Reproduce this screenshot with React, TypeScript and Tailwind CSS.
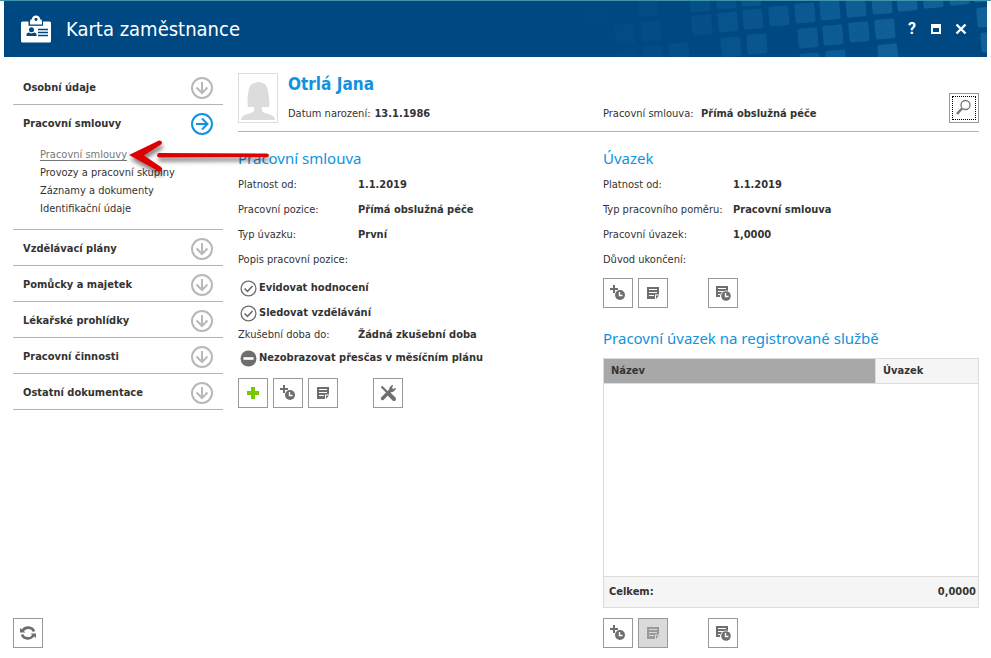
import type { ReactNode } from 'react';

interface MenuSection {
  title: string;
  items?: string[];
}

interface Field {
  label: string;
  value?: string;
}

const sections: MenuSection[] = [
  { title: 'Osobní údaje' },
  {
    title: 'Pracovní smlouvy',
    items: ['Pracovní smlouvy', 'Provozy a pracovní skupiny', 'Záznamy a dokumenty', 'Identifikační údaje'],
  },
  { title: 'Vzdělávací plány' },
  { title: 'Pomůcky a majetek' },
  { title: 'Lékařské prohlídky' },
  { title: 'Pracovní činnosti' },
  { title: 'Ostatní dokumentace' },
];

const contractFields: Field[] = [
  { label: 'Platnost od:', value: '1.1.2019' },
  { label: 'Pracovní pozice:', value: 'Přímá obslužná péče' },
  { label: 'Typ úvazku:', value: 'První' },
  { label: 'Popis pracovní pozice:' },
];

const workloadFields: Field[] = [
  { label: 'Platnost od:', value: '1.1.2019' },
  { label: 'Typ pracovního poměru:', value: 'Pracovní smlouva' },
  { label: 'Pracovní úvazek:', value: '1,0000' },
  { label: 'Důvod ukončení:' },
];

// Centres of the tilted tiles in the header
const tiles = [
  [16, 13], [68, 6], [120, 2], [146, -1], [171, -4],
  [45, 34], [71, 31], [122, 25], [148, 22], [173, 19], [199, 16], [225, 13], [250, 10], [276, 7], [302, 4], [327, 1], [353, -2], [379, -5], [403, -8],
  [47, 59], [73, 56], [99, 53], [151, 47], [177, 44], [228, 38], [253, 35], [279, 32], [305, 29], [407, 17],
  [230, 63], [256, 60], [308, 54], [411, 42],
];

function HeaderTiles() {
  return (
    <svg className="absolute right-0 top-0" width="407" height="56" viewBox="0 0 407 56" aria-hidden="true">
      {tiles.map(([x, y]) => (
        <rect
          key={`${x}-${y}`}
          x={x - 10}
          y={y - 11}
          width="20"
          height="20"
          rx="2.5"
          fill="#116199"
          opacity={Math.min(1, Math.max(0.04, (x - 10) / 320))}
          transform={`rotate(-5 ${x} ${y})`}
        />
      ))}
    </svg>
  );
}

function BadgeIcon() {
  return (
    <svg width="30" height="28" viewBox="0 0 30 28" aria-hidden="true">
      <rect y="6.500" width="30" height="21" rx="1.500" fill="#fff" />
      <path d="M7.500 6H22V10.800H7.500Z" fill="#004882" />
      <path
        fill="#fff"
        fillRule="evenodd"
        d="M9 9.500V6Q9 4.500 10.800 4.200Q11.500 .5 15 .5T19.200 4.200Q21 4.500 21 6V9.500ZM15 2.700A1.600 1.600 0 1 0 15 5.900A1.600 1.600 0 1 0 15 2.700Z"
      />
      <circle cx="10.500" cy="14.700" r="2.500" fill="#004882" />
      <path d="M5.500 21V19.500Q5.500 17.800 7.500 17.500L10.500 18.500L13.500 17.500Q15.500 17.800 15.500 19.500V21Z" fill="#004882" />
      <path d="M17 14.500H27M17 17.500H27M17 20.500H27" stroke="#004882" strokeWidth="1.300" />
    </svg>
  );
}

function CircleArrow({ active }: { active?: boolean }) {
  return (
    <svg width="22" height="22" viewBox="0 0 22 22" fill="none" stroke={active ? '#0f93e0' : '#b8b8b8'} strokeWidth="2" aria-hidden="true">
      <circle cx="11" cy="11" r="10" />
      {active ? <path d="M5 11H16M11 5.500L16.500 11L11 16.500" /> : <path d="M11 5V16M5.500 10.500L11 16L16.500 10.500" />}
    </svg>
  );
}

function RedArrow() {
  return (
    <svg className="pointer-events-none absolute -top-2 left-20 z-10" width="160" height="50" viewBox="0 0 160 50" aria-hidden="true">
      <defs>
        <filter id="arrow-shadow" x="-10%" y="-40%" width="120%" height="200%">
          <feDropShadow dx="1" dy="4" stdDeviation="2" floodColor="#000" floodOpacity="0.5" />
        </filter>
      </defs>
      <g filter="url(#arrow-shadow)" fill="#dc0000">
        <path d="M9 17L39 2.500Q42 2 42 5Q42 6 40 7.200L24 17.500L41 29Q43 31 41 33Q40 34.500 38 33Z" />
        <path d="M39 15L147 15.500Q149 16 149 17.300Q149 19 147 19L39 19.500Q37 19 37 17.200Q37 15.200 39 15Z" />
      </g>
    </svg>
  );
}

function AvatarIcon() {
  return (
    <svg width="34" height="44" viewBox="0 0 34 44" fill="#dcdcdc" aria-hidden="true">
      <path d="M7 29Q6 25 7 16Q8 5 14 5Q17 3 21 5Q27 6 27.500 16Q29 25 28 29L21 29V33Q22 34.500 29 36.500Q34 38 34 42H0Q0 38 5 36.500Q12 34.500 13 33V29Z" />
    </svg>
  );
}

function PlusIcon() {
  return (
    <svg width="20" height="20" viewBox="0 0 20 20" aria-hidden="true">
      <path d="M10 4V16M4 10H16" stroke="#76c800" strokeWidth="4" />
    </svg>
  );
}

function AddClockIcon() {
  return (
    <svg width="20" height="20" viewBox="0 0 20 20" fill="none" aria-hidden="true">
      <path d="M6 2V10M2 6H10" stroke="#6e6e6e" strokeWidth="2" />
      <circle cx="12" cy="12" r="5" fill="#6e6e6e" />
      <path d="M11.500 9V12.500H14.500" stroke="#fff" strokeWidth="1.400" />
    </svg>
  );
}

function NoteIcon({ color = '#6e6e6e' }: { color?: string }) {
  return (
    <svg width="20" height="20" viewBox="0 0 20 20" aria-hidden="true">
      <path fill={color} fillRule="evenodd" d="M4 4H16V11.500H12V16H4ZM6 6V7H14V6ZM6 9V10H14V9ZM6 12V13H11V12Z" />
      <path fill={color} d="M13 12.500H16L13 16Z" />
    </svg>
  );
}

function NoteClockIcon() {
  return (
    <svg width="20" height="20" viewBox="0 0 20 20" fill="none" aria-hidden="true">
      <path fill="#6e6e6e" fillRule="evenodd" d="M3 3H15V8H11L7 12V14H3ZM5 5V6H13V5ZM5 8V9H10V8ZM5 11V12H8V11Z" />
      <circle cx="13" cy="13" r="5.600" fill="#fff" />
      <circle cx="13" cy="13" r="4.800" fill="#6e6e6e" />
      <path d="M12.500 10V13.500H15.500" stroke="#fff" strokeWidth="1.400" />
    </svg>
  );
}

function ToolsIcon() {
  return (
    <svg width="20" height="20" viewBox="0 0 20 20" fill="none" stroke="#6e6e6e" aria-hidden="true">
      <path d="M3.500 3.500L10 10" strokeWidth="2.200" />
      <path d="M11.500 11.500L16 16" strokeWidth="4" strokeLinecap="round" />
      <path d="M4.500 15.500L13 7" strokeWidth="3.400" strokeLinecap="round" />
      <path d="M14.500 2.500Q11 3.500 12 8Q16 9.500 17.500 5.500L15 6.500L13.500 5Z" fill="#6e6e6e" strokeWidth="1" />
    </svg>
  );
}

function RefreshIcon() {
  return (
    <svg width="20" height="20" viewBox="0 0 20 20" fill="none" aria-hidden="true">
      <path d="M4.500 8A6.200 5.800 0 0 1 16 8.500M15.500 12A6.200 5.800 0 0 1 4 11.500" stroke="#6e6e6e" strokeWidth="2.600" />
      <path d="M2 5V9.500H7.500ZM18 15V10.500H12.500Z" fill="#6e6e6e" />
    </svg>
  );
}

function SearchIcon() {
  return (
    <svg width="20" height="20" viewBox="0 0 20 20" fill="none" stroke="#777" aria-hidden="true">
      <circle cx="11.500" cy="7" r="4.500" strokeWidth="1.300" />
      <path d="M8 10.500L3 16" strokeWidth="2.400" />
    </svg>
  );
}

function IconButton({ label, disabled, children }: { label: string; disabled?: boolean; children: ReactNode }) {
  return (
    <button
      type="button"
      aria-label={label}
      disabled={disabled}
      className="flex size-[30px] shrink-0 items-center justify-center border border-[#999] bg-white disabled:bg-[#dadada]"
    >
      {children}
    </button>
  );
}

function Flag({ label, checked }: { label: string; checked?: boolean }) {
  return (
    <label className="flex h-[25px] items-center gap-[2px] pl-[2px] pt-px font-bold">
      <input type="checkbox" defaultChecked={checked} className="sr-only" />
      <svg width="17" height="17" viewBox="0 0 17 17" fill="none" aria-hidden="true">
        {checked ? (
          <>
            <circle cx="8.500" cy="8.500" r="7.400" stroke="#6e6e6e" strokeWidth="1.300" />
            <path d="M4.500 8.500L7.500 11.300L12.500 6" stroke="#6e6e6e" strokeWidth="1.700" />
          </>
        ) : (
          <>
            <circle cx="8.500" cy="8.500" r="8" fill="#6e6e6e" />
            <path d="M3.500 8.500H13.500" stroke="#fff" strokeWidth="2.600" />
          </>
        )}
      </svg>
      {label}
    </label>
  );
}

function FieldList({ fields, columns }: { fields: Field[]; columns: string }) {
  return (
    <dl>
      {fields.map(field => (
        <div key={field.label} className={`grid h-[25px] items-center pt-px ${columns}`}>
          <dt>{field.label}</dt>
          <dd className="font-bold">{field.value}</dd>
        </div>
      ))}
    </dl>
  );
}

function SectionTitle({ children }: { children: ReactNode }) {
  return <h2 className="font-['Noto_Sans',sans-serif] text-[15px] leading-[20px] text-[#0f93e0]">{children}</h2>;
}

function Sidebar() {
  return (
    <nav className="flex w-[210px] shrink-0 flex-col">
      {sections.map(section => (
        <div key={section.title} className="border-b border-[#b4b4b4]">
          <button type="button" className="flex h-[35px] w-full items-center justify-between px-[10px] pt-[2px] font-bold">
            {section.title}
            <CircleArrow active={!!section.items} />
          </button>
          {section.items && (
            <ul className="pb-[11px] pl-[27px] pt-[6px]">
              {section.items.map((item, i) => (
                <li key={item} className="relative h-[18px] leading-[18px]">
                  <a href="#" className={i === 0 ? 'text-[#777] underline underline-offset-2' : ''}>
                    {item}
                  </a>
                  {i === 0 && <RedArrow />}
                </li>
              ))}
            </ul>
          )}
        </div>
      ))}
      <div className="mt-auto">
        <IconButton label="Obnovit"><RefreshIcon /></IconButton>
      </div>
    </nav>
  );
}

function EmployeeHeader() {
  return (
    <div className="grid grid-cols-[365px_1fr] border-b border-[#b4b4b4] pb-2 pt-1">
      <div className="flex gap-[10px]">
        <div className="flex h-[50px] w-10 items-end justify-center border border-[#dcdcdc]">
          <AvatarIcon />
        </div>
        <div>
          <h1 className="text-[17px] font-bold leading-[22px] text-[#0f93e0]">Otrlá Jana</h1>
          <p className="mt-[10px] flex gap-1 leading-[18px]">
            Datum narození: <b>13.1.1986</b>
          </p>
        </div>
      </div>
      <div className="flex items-end justify-between">
        <p className="grid grid-cols-[98px_1fr] leading-[18px]">
          <span>Pracovní smlouva:</span>
          <b>Přímá obslužná péče</b>
        </p>
        <button
          type="button"
          aria-label="Hledat"
          className="flex size-[30px] items-center justify-center border border-[#999] p-[2px]"
        >
          <span className="flex size-full items-center justify-center border border-dotted border-black">
            <SearchIcon />
          </span>
        </button>
      </div>
    </div>
  );
}

export default function App() {
  return (
    <div className="flex min-h-screen flex-col border-t border-[#3f96ac] bg-white font-['DejaVu_Sans_Condensed','DejaVu_Sans',sans-serif] text-[11px] leading-[16px] text-[#333]">
      <header className="relative mx-1 flex h-14 items-center overflow-hidden bg-[#004882] pl-[17px] pr-5 text-white">
        <HeaderTiles />
        <BadgeIcon />
        <div className="ml-[15px] text-[20px] leading-[26px]">Karta zaměstnance</div>
        <div className="relative ml-auto flex items-center gap-[14px]">
          <button type="button" className="w-[10px] font-['Roboto',sans-serif] text-[16px] font-bold leading-[20px]">?</button>
          <button type="button" aria-label="Maximalizovat">
            <svg width="10" height="10" viewBox="0 0 10 10"><path fill="#fff" fillRule="evenodd" d="M0 0H10V10H0ZM2 4V8H8V4Z" /></svg>
          </button>
          <button type="button" aria-label="Zavřít">
            <svg width="12" height="12" viewBox="0 0 12 12"><path d="M1.500 1.500L10.500 10.500M10.500 1.500L1.500 10.500" stroke="#fff" strokeWidth="2.400" /></svg>
          </button>
        </div>
      </header>

      <div className="flex flex-1 gap-[15px] pb-[10px] pl-[13px] pr-3 pt-3">
        <Sidebar />

        <main className="flex min-w-0 flex-1 flex-col">
          <EmployeeHeader />
          <div className="grid flex-1 grid-cols-[365px_1fr] pt-4">
            <section>
              <SectionTitle>Pracovní smlouva</SectionTitle>
              <div className="pt-1">
                <FieldList fields={contractFields} columns="grid-cols-[120px_1fr]" />
              </div>
              <div className="pt-[3px]">
                <Flag label="Evidovat hodnocení" checked />
                <Flag label="Sledovat vzdělávání" checked />
                <div className="grid h-5 grid-cols-[120px_1fr] items-center">
                  <span>Zkušební doba do:</span>
                  <b>Žádná zkušební doba</b>
                </div>
                <Flag label="Nezobrazovat přesčas v měsíčním plánu" />
              </div>
              <div className="flex gap-[5px] pt-2">
                <IconButton label="Přidat"><PlusIcon /></IconButton>
                <IconButton label="Přidat období"><AddClockIcon /></IconButton>
                <IconButton label="Upravit"><NoteIcon /></IconButton>
                <div className="pl-[30px]">
                  <IconButton label="Nastavení"><ToolsIcon /></IconButton>
                </div>
              </div>
            </section>

            <section className="flex flex-col">
              <SectionTitle>Úvazek</SectionTitle>
              <div className="pt-1">
                <FieldList fields={workloadFields} columns="grid-cols-[130px_1fr]" />
              </div>
              <div className="flex gap-[5px] pt-[6px]">
                <IconButton label="Přidat období"><AddClockIcon /></IconButton>
                <IconButton label="Upravit"><NoteIcon /></IconButton>
                <div className="pl-[35px]">
                  <IconButton label="Historie"><NoteClockIcon /></IconButton>
                </div>
              </div>

              <div className="pb-[10px] pt-5">
                <SectionTitle>Pracovní úvazek na registrované službě</SectionTitle>
              </div>
              <table className="w-full table-fixed border-collapse border border-[#dcdcdc] text-left">
                <thead>
                  <tr className="h-[25px]">
                    <th className="bg-[#a8a8a8] px-[7px]">Název</th>
                    <th className="w-[103px] border border-[#dcdcdc] bg-[#f5f5f5] px-[7px]">Úvazek</th>
                  </tr>
                </thead>
                <tbody>
                  <tr className="h-[193px]">
                    <td colSpan={2} className="border border-[#dcdcdc]" />
                  </tr>
                </tbody>
                <tfoot>
                  <tr className="h-[31px] bg-[#f5f5f5]">
                    <th className="px-[5px]">Celkem:</th>
                    <td className="px-[2px] text-right font-bold">0,0000</td>
                  </tr>
                </tfoot>
              </table>
              <div className="mt-auto flex gap-[5px]">
                <IconButton label="Přidat období"><AddClockIcon /></IconButton>
                <IconButton label="Upravit" disabled><NoteIcon color="#9a9a9a" /></IconButton>
                <div className="pl-[35px]">
                  <IconButton label="Historie"><NoteClockIcon /></IconButton>
                </div>
              </div>
            </section>
          </div>
        </main>
      </div>
    </div>
  );
}
